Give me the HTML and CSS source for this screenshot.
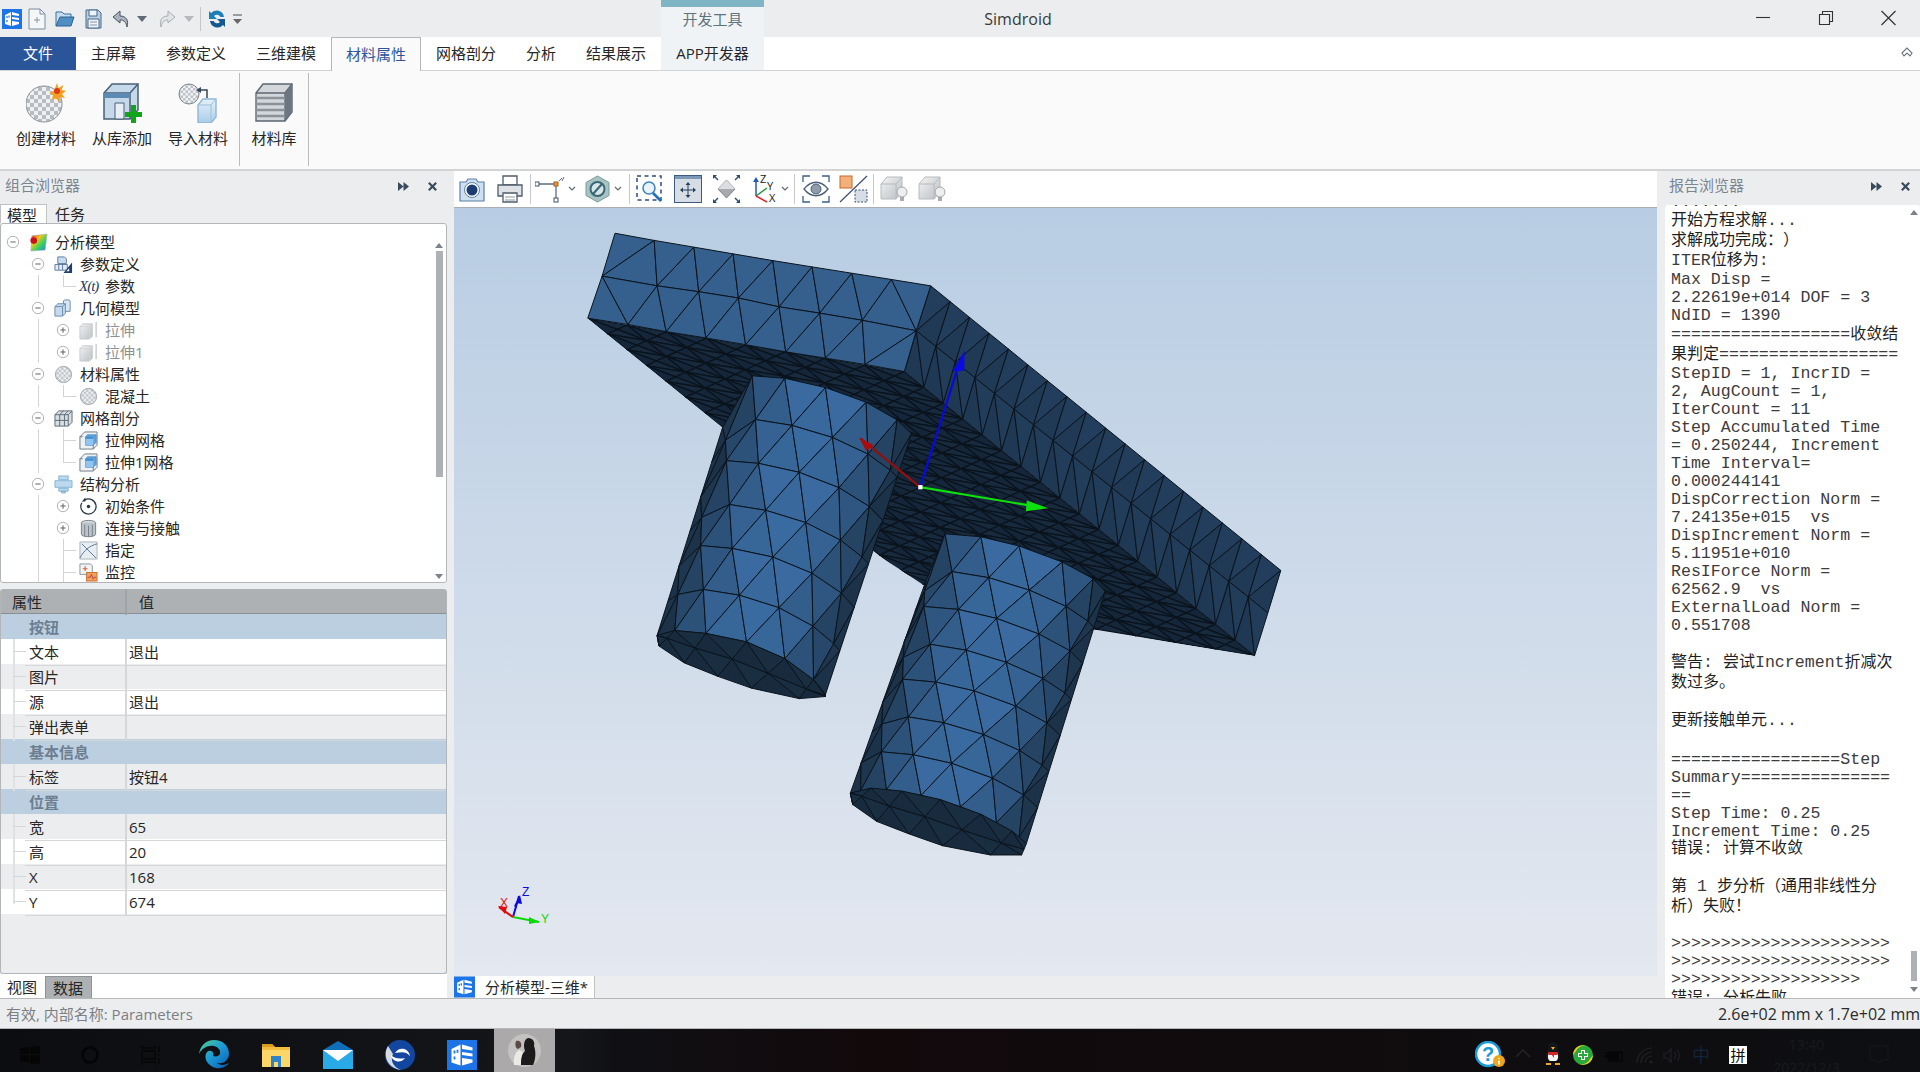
FILE: index.html
```html
<!DOCTYPE html>
<html lang="zh">
<head>
<meta charset="utf-8">
<title>Simdroid</title>
<link rel="stylesheet" href="styles.css">
</head>
<body>
<svg class="defs" width="0" height="0" aria-hidden="true">
  <defs>
    <linearGradient id="vpbg" x1="0" y1="0" x2="0" y2="1"><stop offset="0" stop-color="#b8cde3"/><stop offset="1" stop-color="#e4e8f0"/></linearGradient>
    <linearGradient id="rainbow" x1="0" y1="0" x2="1" y2="1"><stop offset="0" stop-color="#e8141c"/><stop offset=".35" stop-color="#f5c518"/><stop offset=".6" stop-color="#3fd45a"/><stop offset="1" stop-color="#1a7fe0"/></linearGradient>
    <linearGradient id="edgeg" x1="0" y1="0" x2="1" y2="1"><stop offset="0" stop-color="#52d08a"/><stop offset=".5" stop-color="#1b9ad6"/><stop offset="1" stop-color="#0c5bb0"/></linearGradient>
    <linearGradient id="steel" x1="0" y1="0" x2="1" y2="1"><stop offset="0" stop-color="#f4f5f6"/><stop offset="1" stop-color="#b9bdc2"/></linearGradient>
    <linearGradient id="blueg" x1="0" y1="0" x2="0" y2="1"><stop offset="0" stop-color="#e6f1fa"/><stop offset="1" stop-color="#a9cdea"/></linearGradient>
    <pattern id="checker" width="8" height="8" patternUnits="userSpaceOnUse"><rect width="8" height="8" fill="#eef0f2"/><rect width="4" height="4" fill="#b7bcc2"/><rect x="4" y="4" width="4" height="4" fill="#b7bcc2"/></pattern>
    <pattern id="dots" width="5" height="5" patternUnits="userSpaceOnUse"><rect width="5" height="5" fill="#f2f3f5"/><rect width="2.500" height="2.500" fill="#bcc1c7"/><rect x="2.500" y="2.500" width="2.500" height="2.500" fill="#bcc1c7"/></pattern>

    <symbol id="app" viewBox="0 0 20 20"><rect width="20" height="20" fill="#1c74e6"/><path d="M3 6 9 3v14l-6-2zM10 3l7 2v2l-7-1zM10 8l7 1v2l-7-1zM10 12l7 1v2l-7 2z" fill="#fff"/><path d="M5 7v2M5 11v2M7 6.500v2" stroke="#1c74e6" stroke-width="1.200"/></symbol>
    <symbol id="min" viewBox="0 0 16 16"><circle cx="8" cy="8" r="6.500" fill="#fff" stroke="#a8a8a8"/><path d="M5 8h6" stroke="#666" stroke-width="1.200"/></symbol>
    <symbol id="plus" viewBox="0 0 16 16"><circle cx="8" cy="8" r="6.500" fill="#fff" stroke="#a8a8a8"/><path d="M5 8h6M8 5v6" stroke="#666" stroke-width="1.200"/></symbol>
    <symbol id="t-root" viewBox="0 0 20 20"><path d="M3 3 19 1l-2 17-15 1z" fill="url(#rainbow)" stroke="#9fb3c6" stroke-width=".6"/><circle cx="5" cy="8" r="3.500" fill="#c9101a"/></symbol>
    <symbol id="t-param" viewBox="0 0 20 20"><path d="M4 2h7l2 2v5H4z" fill="#c9dcef" stroke="#5d7b9c"/><path d="M1 10h13v6H1z" fill="#e4edf6" stroke="#5d7b9c"/><path d="M5 10v6M9 10v6" stroke="#5d7b9c"/><path d="M19 8v11H10z" fill="#1f3f6c"/><path d="M16 14v3h-3z" fill="#fff"/></symbol>
    <symbol id="t-geo" viewBox="0 0 20 20"><path d="M10 2c0-1.500 7-1.500 7 0v11h-7z" fill="#d7e6f3" stroke="#6d8aa8"/><path d="M1 8l3-3h8v10l-3 3H1z" fill="#c3daef" stroke="#6d8aa8"/><path d="M1 8h8v10M9 8l3-3" fill="none" stroke="#6d8aa8"/></symbol>
    <symbol id="t-solid" viewBox="0 0 20 20"><path d="M1 6l3-3h10v13l-3 3H1z" fill="url(#steel)" stroke="#c6c9cc"/><path d="M1 6h10v13M11 6l3-3" fill="none" stroke="#d2d4d6"/><path d="M18 1v16" stroke="#b0b3b6"/></symbol>
    <symbol id="t-mat" viewBox="0 0 20 20"><circle cx="10" cy="10" r="8.500" fill="url(#dots)" stroke="#9aa2ab"/></symbol>
    <symbol id="t-grid" viewBox="0 0 20 20"><path d="M1 6l4-4h14v12l-4 4H1z" fill="#d9dee4" stroke="#5b6875"/><path d="M1 6h14v12M15 6l4-4M1 12h14M6 6v12M11 6v12M10 2l-4 4M15 2l-4 4" fill="none" stroke="#5b6875"/></symbol>
    <symbol id="t-mesh" viewBox="0 0 20 20"><path d="M1 6l5-5h13v14l-4 4H1z" fill="#eef1f4" stroke="#6c7a88"/><path d="M1 6h3M15 19V12" stroke="#6c7a88"/><path d="M7 6l2-2h9v8l-3 3H7z" fill="#62a8e0" stroke="#3978b0" stroke-width=".7"/><path d="M7 8h8v7H7z" fill="#8fc5ee"/><path d="M7 6h8v2H7z" fill="#3f8bcd"/></symbol>
    <symbol id="t-struct" viewBox="0 0 20 20"><path d="M5 1h10v4H5zM1 6h18v7H1zM5 14h10v3H5zM8 17h4v2H8z" fill="#bcd9ee" stroke="#72a6cc" stroke-width=".8"/></symbol>
    <symbol id="t-init" viewBox="0 0 20 20"><path d="M6 3a8 8 0 1 1-3 3" fill="none" stroke="#2a3644" stroke-width="1.300"/><path d="M6.500 .500l.5 4-4 .5z" fill="#2a3644"/><circle cx="10" cy="10" r="1.800" fill="#2a3644"/></symbol>
    <symbol id="t-contact" viewBox="0 0 20 20"><ellipse cx="10" cy="4" rx="7.500" ry="2.500" fill="#d7dadd" stroke="#76808a"/><path d="M2.500 4v12c0 3.500 15 3.500 15 0V4" fill="#bcc3c9" stroke="#76808a"/><path d="M6 6v12M10 7v12M14 6v12" stroke="#76808a"/></symbol>
    <symbol id="t-assign" viewBox="0 0 20 20"><path d="M1 1h18v18H1z" fill="#e8edf2" stroke="#a9b3bd"/><path d="M1 18C5 10 11 5 19 3M3 3l15 15" fill="none" stroke="#5a7694"/></symbol>
    <symbol id="t-monitor" viewBox="0 0 20 20"><path d="M1 1h11l2 2v9H1z" fill="#f2f3f5" stroke="#8a949e"/><path d="M4 6h5M6.500 3.500v5" stroke="#e0622c" stroke-width="1.200"/><rect x="8" y="10" width="11" height="9" fill="#f0a060" stroke="#cf6f2c"/><path d="M9 15h3l1-3 2 5 1-2h2" fill="none" stroke="#a33" stroke-width=".8"/></symbol>

    <symbol id="cubebulb" viewBox="0 0 28 28"><path d="M1 9l6-7h15v15l-6 7H1z" fill="url(#steel)" stroke="#b6babe"/><path d="M1 9h15v15M16 9l6-7" fill="none" stroke="#b6babe"/><circle cx="22" cy="17" r="5" fill="#eeeeee" stroke="#a3a7ab"/><path d="M20 22h4v4h-4z" fill="#a8acb0"/></symbol>
    <symbol id="chev" viewBox="0 0 8 6"><path d="M1 1l3 3 3-3" fill="none" stroke="#5e6a78" stroke-width="1.200"/></symbol>
    <symbol id="dbl" viewBox="0 0 12 12"><path d="M0 1l6 5-6 5zM6 1l6 5-6 5z" fill="#3a4a5c"/></symbol>
    <symbol id="x" viewBox="0 0 12 12"><path d="M2 2l8 8M10 2l-8 8" stroke="#3a4a5c" stroke-width="2.400"/></symbol>
  </defs>
</svg>

<div class="app">
  <header class="titlebar">
    <div class="qat">
      <svg class="ml2" width="20" height="20"><use href="#app"/></svg>
      <svg class="ml6" width="18" height="22" viewBox="0 0 18 22"><path d="M1 1h11l5 5v15H1z" fill="#f4f6f8" stroke="#7d8ea0"/><path d="M12 1v5h5" fill="none" stroke="#7d8ea0"/><path d="M6 12h6M9 9v6" stroke="#8a97a4"/></svg>
      <svg class="ml9" width="20" height="18" viewBox="0 0 20 18"><path d="M1 16V2h6l2 2h7v3" fill="#c7dcee" stroke="#3d6f9e"/><path d="M1 16 5 7h14l-3 9z" fill="#4f8fc4" stroke="#2f628f"/></svg>
      <svg class="ml10" width="17" height="20" viewBox="0 0 17 20"><path d="M1 1h12l3 3v15H1z" fill="#b9cfe3" stroke="#49688a"/><path d="M4 1h8v6H4z" fill="#eef3f7" stroke="#49688a"/><path d="M3 10h11v9H3z" fill="#f1f4f7" stroke="#49688a"/><path d="M5 13h7M5 16h7" stroke="#8295a8"/></svg>
      <svg class="ml10" width="18" height="20" viewBox="0 0 18 20"><path d="M8 2 1 8l7 6v-3c4 0 6 2 7 7 2-7-1-11-7-11z" fill="#aab3bd" stroke="#4a5563"/></svg>
      <svg class="ml7" width="10" height="8" viewBox="0 0 10 8"><path d="M0 1h10L5 7z" fill="#5f6a76"/></svg>
      <svg class="ml11" width="18" height="20" viewBox="0 0 18 20"><path d="M10 2l7 6-7 6v-3c-4 0-6 2-7 7-2-7 1-11 7-11z" fill="#e2e4e7" stroke="#a7adb3"/></svg>
      <svg class="ml8" width="10" height="8" viewBox="0 0 10 8"><path d="M0 1h10L5 7z" fill="#b5b9be"/></svg>
      <span class="qsep ml6"></span>
      <svg class="ml7" width="18" height="22" viewBox="0 0 18 22"><path d="M16 9A7.500 7.500 0 0 0 3 5L1 3v8h8L6 8a4 4 0 0 1 6.500 1z" fill="#1c7fb8"/><path d="M2 13a7.500 7.500 0 0 0 13 4l2 2v-8H9l3 3a4 4 0 0 1-6.500-1z" fill="#14598f"/></svg>
      <svg class="ml7" width="9" height="12" viewBox="0 0 9 12"><path d="M0 2h9" stroke="#666" stroke-width="1.200"/><path d="M0 6h9l-4.500 5z" fill="#666"/></svg>
    </div>
    <div class="ctx-title"><span>开发工具</span></div>
    <div class="wintitle">Simdroid</div>
    <div class="winctl">
      <svg width="63" height="37" viewBox="0 0 63 37"><path d="M25 17.500h14" stroke="#333" stroke-width="1.100"/></svg>
      <svg width="63" height="37" viewBox="0 0 63 37"><path d="M25.500 14.500h10v10h-10zM28.500 14.500v-3h10v10h-3" fill="none" stroke="#333" stroke-width="1.100"/></svg>
      <svg width="63" height="37" viewBox="0 0 63 37"><path d="M24.500 11l14 14M38.500 11l-14 14" stroke="#333" stroke-width="1.200"/></svg>
    </div>
  </header>

  <nav class="menubar">
    <span class="tab tab-file">文件</span>
    <span class="tab">主屏幕</span>
    <span class="tab">参数定义</span>
    <span class="tab">三维建模</span>
    <span class="tab tab-on">材料属性</span>
    <span class="tab">网格剖分</span>
    <span class="tab">分析</span>
    <span class="tab">结果展示</span>
    <span class="tab tab-ctx">APP开发器</span>
    <svg class="collapse" width="12" height="10" viewBox="0 0 12 10"><path d="M1 6l5-5 5 5-2 3-3-3-3 3z" fill="#fff" stroke="#6a737c" stroke-width="1.100"/></svg>
  </nav>

  <section class="ribbon">
    <div class="rgroup">
      <div class="rbtn">
        <svg width="40" height="40" viewBox="0 0 40 40"><circle cx="18" cy="21" r="18" fill="url(#checker)" stroke="#8a9097"/><path d="M31 0l1.500 5 5-3-2 5 4.500 1-4 3 3 4-5-1-1 5-3-4-4 2 1-5-4-2 5-2z" fill="#f4a01e"/><circle cx="31" cy="8" r="3" fill="#e23a12"/></svg>
        <span>创建材料</span>
      </div>
      <div class="rbtn">
        <svg width="40" height="40" viewBox="0 0 40 40"><path d="M2 10l8-9h26v26l-8 9H2z" fill="#c6d9ea" stroke="#4b6076" stroke-width="1.500"/><path d="M2 10h26v26M28 10l8-9" fill="none" stroke="#4b6076" stroke-width="1.500"/><path d="M2 10h26v5H2z" fill="#5d8ab4"/><path d="M13 20h9v16h-9z" fill="#e7eef5" stroke="#4b6076"/><path d="M29 22h5v7h6v5h-6v6h-5v-6h-6v-5h6z" fill="#12a51c"/></svg>
        <span>从库添加</span>
      </div>
      <div class="rbtn">
        <svg width="40" height="40" viewBox="0 0 40 40"><circle cx="11" cy="11" r="10" fill="url(#dots)" stroke="#7d868f"/><path d="M22 7h7v8" fill="none" stroke="#39485a" stroke-width="1.500"/><path d="M18 7l5-3v6z" fill="#39485a"/><path d="M20 22l5-6h13v18l-5 6H20z" fill="url(#blueg)" stroke="#8fb6d6" stroke-width="1.400"/><path d="M20 22h13v18M33 22l5-6" fill="none" stroke="#9cc1de"/></svg>
        <span>导入材料</span>
      </div>
    </div>
    <span class="rsep"></span>
    <div class="rgroup">
      <div class="rbtn rbtn-lib">
        <svg width="40" height="40" viewBox="0 0 40 40"><path d="M2 10l7-9h29v28l-7 9H2z" fill="#d3d6da" stroke="#5c6670" stroke-width="1.400"/><path d="M2 10h29v28M31 10l7-9" fill="none" stroke="#5c6670" stroke-width="1.400"/><path d="M2 15h29M2 21h29M2 27h29M2 33h29" stroke="#8b929a" stroke-width="2.500"/><path d="M31 10l7-9v28l-7 9z" fill="#6c7680"/></svg>
        <span>材料库</span>
      </div>
    </div>
    <span class="rsep"></span>
  </section>

  <main class="workspace">
    <aside class="leftpanel">
      <div class="phead"><span>组合浏览器</span><svg class="pbtn" width="11" height="11"><use href="#dbl"/></svg><svg class="pbtn pbtn-x" width="11" height="11"><use href="#x"/></svg></div>
      <div class="ltabs"><span class="ltab ltab-on">模型</span><span class="ltab">任务</span></div>
      <div class="treebox">
        <div class="tree">
          <div class="row"><span class="cell"><svg class="tg" width="14" height="14"><use href="#min"/></svg></span><svg class="ic" width="19" height="19"><use href="#t-root"/></svg><span>分析模型</span></div>
          <div class="row"><span class="cell"></span><span class="cell"><svg class="tg" width="14" height="14"><use href="#min"/></svg></span><svg class="ic" width="19" height="19"><use href="#t-param"/></svg><span>参数定义</span></div>
          <div class="row"><span class="cell"></span><span class="cell g-v"></span><span class="cell g-l"></span><span class="ic ic-xt">X(t)</span><span>参数</span></div>
          <div class="row"><span class="cell"></span><span class="cell"><svg class="tg" width="14" height="14"><use href="#min"/></svg></span><svg class="ic" width="19" height="19"><use href="#t-geo"/></svg><span>几何模型</span></div>
          <div class="row muted"><span class="cell"></span><span class="cell g-v"></span><span class="cell"><svg class="tg" width="14" height="14"><use href="#plus"/></svg></span><svg class="ic" width="19" height="19"><use href="#t-solid"/></svg><span>拉伸</span></div>
          <div class="row muted"><span class="cell"></span><span class="cell g-v"></span><span class="cell"><svg class="tg" width="14" height="14"><use href="#plus"/></svg></span><svg class="ic" width="19" height="19"><use href="#t-solid"/></svg><span>拉伸1</span></div>
          <div class="row"><span class="cell"></span><span class="cell"><svg class="tg" width="14" height="14"><use href="#min"/></svg></span><svg class="ic" width="19" height="19"><use href="#t-mat"/></svg><span>材料属性</span></div>
          <div class="row"><span class="cell"></span><span class="cell g-v"></span><span class="cell g-l"></span><svg class="ic" width="19" height="19"><use href="#t-mat"/></svg><span>混凝土</span></div>
          <div class="row"><span class="cell"></span><span class="cell"><svg class="tg" width="14" height="14"><use href="#min"/></svg></span><svg class="ic" width="19" height="19"><use href="#t-grid"/></svg><span>网格剖分</span></div>
          <div class="row"><span class="cell"></span><span class="cell g-v"></span><span class="cell g-t"></span><svg class="ic" width="19" height="19"><use href="#t-mesh"/></svg><span>拉伸网格</span></div>
          <div class="row"><span class="cell"></span><span class="cell g-v"></span><span class="cell g-l"></span><svg class="ic" width="19" height="19"><use href="#t-mesh"/></svg><span>拉伸1网格</span></div>
          <div class="row"><span class="cell"></span><span class="cell"><svg class="tg" width="14" height="14"><use href="#min"/></svg></span><svg class="ic" width="19" height="19"><use href="#t-struct"/></svg><span>结构分析</span></div>
          <div class="row"><span class="cell"></span><span class="cell g-v"></span><span class="cell"><svg class="tg" width="14" height="14"><use href="#plus"/></svg></span><svg class="ic" width="19" height="19"><use href="#t-init"/></svg><span>初始条件</span></div>
          <div class="row"><span class="cell"></span><span class="cell g-v"></span><span class="cell"><svg class="tg" width="14" height="14"><use href="#plus"/></svg></span><svg class="ic" width="19" height="19"><use href="#t-contact"/></svg><span>连接与接触</span></div>
          <div class="row"><span class="cell"></span><span class="cell g-v"></span><span class="cell g-t"></span><svg class="ic" width="19" height="19"><use href="#t-assign"/></svg><span>指定</span></div>
          <div class="row"><span class="cell"></span><span class="cell g-v"></span><span class="cell g-t"></span><svg class="ic" width="19" height="19"><use href="#t-monitor"/></svg><span>监控</span></div>
        </div>
        <div class="vscroll vscroll-tree"><i class="arr-up"></i><b class="thumb"></b><i class="arr-down"></i></div>
      </div>
      <div class="props">
        <div class="prow phdr"><span class="pk">属性</span><span class="pv">值</span></div>
        <div class="prow pgroup"><span>按钮</span></div>
        <div class="prow pw"><span class="pg"></span><span class="pk">文本</span><span class="pv">退出</span></div>
        <div class="prow"><span class="pg"></span><span class="pk">图片</span><span class="pv"></span></div>
        <div class="prow pw"><span class="pg"></span><span class="pk">源</span><span class="pv">退出</span></div>
        <div class="prow"><span class="pg"></span><span class="pk">弹出表单</span><span class="pv"></span></div>
        <div class="prow pgroup"><span>基本信息</span></div>
        <div class="prow"><span class="pg"></span><span class="pk">标签</span><span class="pv">按钮4</span></div>
        <div class="prow pgroup"><span>位置</span></div>
        <div class="prow"><span class="pg"></span><span class="pk">宽</span><span class="pv">65</span></div>
        <div class="prow pw"><span class="pg"></span><span class="pk">高</span><span class="pv">20</span></div>
        <div class="prow"><span class="pg"></span><span class="pk">X</span><span class="pv">168</span></div>
        <div class="prow pw pend"><span class="pg"></span><span class="pk">Y</span><span class="pv">674</span></div>
      </div>
      <div class="btabs"><span class="btab">视图</span><span class="btab btab-on">数据</span></div>
    </aside>

    <section class="center">
      <div class="vtools">
        <svg class="ml4" width="28" height="28" viewBox="0 0 28 28"><path d="M2 7h6l2-3h8l2 3h6v19H2z" fill="#cfe0f0" stroke="#5f7fa3" stroke-width="1.200"/><circle cx="14" cy="15" r="7.500" fill="#fff" stroke="#5f7fa3"/><circle cx="14" cy="15" r="5.500" fill="#1c3c74"/></svg>
        <svg class="ml11" width="26" height="28" viewBox="0 0 26 28"><path d="M6 1h14v9H6z" fill="#fff" stroke="#4f5c6b" stroke-width="1.300"/><path d="M1 10h24v11H1z" fill="#dfe3e7" stroke="#4f5c6b" stroke-width="1.300"/><path d="M6 18h14v9H6z" fill="#fff" stroke="#4f5c6b" stroke-width="1.300"/><path d="M8 22h10M8 25h10" stroke="#8b95a0"/></svg>
        <span class="vsep ml7"></span>
        <svg class="ml4" width="30" height="28" viewBox="0 0 30 28"><path d="M2 9h19M21 9v16" stroke="#5c6f84" stroke-width="1.300"/><path d="M24 6l3-3M27 6l2-4" stroke="#5c6f84" stroke-width="1"/><rect x="0" y="7" width="4" height="4" fill="#fff" stroke="#3f5268"/><rect x="19" y="23" width="4" height="4" fill="#fff" stroke="#3f5268"/><rect x="19" y="7" width="4" height="4" fill="#e6923e" stroke="#a8601c"/></svg>
        <svg class="ml3" width="8" height="6"><use href="#chev"/></svg>
        <svg class="ml9" width="25" height="28" viewBox="0 0 25 28"><path d="M12.500 1 24 7.500v13L12.500 27 1 20.500v-13z" fill="#a8c3c2" stroke="#7b9b9a"/><circle cx="12.500" cy="14" r="7" fill="#d9e6e6" stroke="#3a6878" stroke-width="2"/><path d="M8 19l9-10" stroke="#3a6878" stroke-width="2.200"/></svg>
        <svg class="ml4" width="8" height="6"><use href="#chev"/></svg>
        <span class="vsep ml7"></span>
        <svg class="ml6" width="27" height="28" viewBox="0 0 27 28"><rect x="1" y="1" width="24" height="24" fill="none" stroke="#2f4a78" stroke-width="1.500" stroke-dasharray="4 3.500"/><circle cx="13" cy="13" r="6" fill="#eaf3fb" stroke="#3f86c0" stroke-width="1.600"/><path d="M17 18l8 8" stroke="#2272b4" stroke-width="2.600"/></svg>
        <svg class="ml11" width="28" height="28" viewBox="0 0 28 28"><rect x=".5" y=".5" width="27" height="27" fill="#d7dde5" stroke="#3f5a80"/><path d="M1 1h26v3H1z" fill="#7e98b8"/><path d="M14 9v12M8 15h12" stroke="#24405f"/><path d="M14 7l2.500 3h-5zM14 23l2.500-3h-5zM6 15l3-2.500v5zM22 15l-3-2.500v5z" fill="#24405f"/></svg>
        <svg class="ml11" width="27" height="28" viewBox="0 0 27 28"><path d="M13.500 5 22 14l-8.500 9L5 14z" fill="#a6a9ad" stroke="#7e8287"/><path d="M13.500 5 22 14H5z" fill="#dcdde0"/><path d="M1 1l4 4M26 1l-4 4M1 27l4-4M26 27l-4-4" stroke="#2c4a75" stroke-width="1.400"/><path d="M0 0h4L0 4zM27 0h-4l4 4zM0 28h4l-4-4zM27 28h-4l4-4z" fill="#2c4a75"/></svg>
        <svg class="ml12 triad" width="26" height="30" viewBox="0 0 26 30"><path d="M4 22V6" stroke="#1d5fb5" stroke-width="1.500"/><path d="M4 3l3 5H1z" fill="#1d5fb5"/><path d="M4 22 15 14" stroke="#1d9a3c" stroke-width="1.500"/><path d="M4 22 15 28" stroke="#e0262a" stroke-width="1.500"/><text x="8" y="9" class="axt">Z</text><text x="15" y="16" class="axt">Y</text><text x="17" y="28" class="axt">X</text></svg>
        <svg class="ml3" width="8" height="6"><use href="#chev"/></svg>
        <span class="vsep ml5"></span>
        <svg class="ml7" width="28" height="28" viewBox="0 0 28 28"><path d="M1 7V1h7M20 1h7v6M1 21v6h7M20 27h7v-6" fill="none" stroke="#3f5e86" stroke-width="1.300"/><path d="M2 14c7-9 17-9 24 0-7 9-17 9-24 0z" fill="#fff" stroke="#4d6078" stroke-width="1.300"/><circle cx="14" cy="14" r="5" fill="#8e9cac" stroke="#4d6078"/></svg>
        <svg class="ml9" width="29" height="28" viewBox="0 0 29 28"><rect x="1" y="1" width="12" height="12" fill="#f1b07c" stroke="#c9682a"/><path d="M1 27 28 1" stroke="#3a5070" stroke-width="1.200"/><rect x="16" y="15" width="12" height="12" fill="#d6dde6" stroke="#3a5070" stroke-dasharray="2 1.500"/></svg>
        <span class="vsep ml5"></span>
        <svg class="ml6" width="28" height="28"><use href="#cubebulb"/></svg>
        <svg class="ml10" width="28" height="28"><use href="#cubebulb"/></svg>
      </div>
      <div class="viewport">
        <svg class="scene" viewBox="454 207 1203 769" preserveAspectRatio="none" role="img" aria-label="分析模型">
          <rect x="454" y="207" width="1203" height="769" fill="url(#vpbg)"/>
          <g id="mesh" transform="translate(560 210) scale(.4783 .4209)"></g>
          <g transform="translate(560 210) scale(.4783 .4209)">
            <path d="M753 657 628 541" stroke="#8f1010" stroke-width="2.400" vector-effect="non-scaling-stroke"/>
            <path d="M625 538 656 557 640 571z" fill="#a80c0c"/>
            <path d="M753 657 838 350" stroke="#0808e0" stroke-width="2.200" vector-effect="non-scaling-stroke"/>
            <path d="M846 332 845 380 821 381z" fill="#0a0ae6"/>
            <path d="M753 657 990 702" stroke="#10e010" stroke-width="2.200" vector-effect="non-scaling-stroke"/>
            <path d="M1021 707 976 689 974 714z" fill="#0de00d"/>
            <rect x="749" y="652" width="9" height="10" fill="#fff"/>
          </g>
          <g class="mini">
            <path d="M513 917 519 896" stroke="#0b0be0" stroke-width="2"/>
            <path d="M520 895 522 904 516 903 517 908 514 906z" fill="#0b0be0"/>
            <path d="M513 917 499 907" stroke="#e00b0b" stroke-width="2"/>
            <path d="M498 906 507 907 505 914z" fill="#e00b0b"/>
            <path d="M513 917 539 922" stroke="#0bd80b" stroke-width="2"/>
            <path d="M540 922 529 917 529 924z" fill="#0bd80b"/>
            <text x="522" y="896" class="mz">Z</text>
            <text x="500" y="907" class="mx">X</text>
            <text x="541" y="923" class="my">Y</text>
          </g>
        </svg>
      </div>
      <div class="doctabs">
        <svg width="21" height="22"><use href="#app"/></svg>
        <span class="doctab">分析模型-三维*</span>
      </div>
    </section>

    <aside class="rightpanel">
      <div class="phead"><span>报告浏览器</span><svg class="pbtn" width="11" height="11"><use href="#dbl"/></svg><svg class="pbtn pbtn-x" width="11" height="11"><use href="#x"/></svg></div>
      <div class="logbox">
        <div class="log">
          <div class="m">.......</div>
          <div class="c">开始方程求解<span class="a">...</span></div>
          <div class="c">求解成功完成：）</div>
          <div class="c"><span class="a">ITER</span>位移为<span class="a">:</span></div>
          <div class="m">Max Disp =</div>
          <div class="m">2.22619e+014 DOF = 3</div>
          <div class="m">NdID = 1390</div>
          <div class="c"><span class="a">==================</span>收敛结</div>
          <div class="c">果判定<span class="a">==================</span></div>
          <div class="m">StepID = 1, IncrID =</div>
          <div class="m">2, AugCount = 1,</div>
          <div class="m">IterCount = 11</div>
          <div class="m">Step Accumulated Time</div>
          <div class="m">= 0.250244, Increment</div>
          <div class="m">Time Interval=</div>
          <div class="m">0.000244141</div>
          <div class="m">DispCorrection Norm =</div>
          <div class="m">7.24135e+015  vs</div>
          <div class="m">DispIncrement Norm =</div>
          <div class="m">5.11951e+010</div>
          <div class="m">ResIForce Norm =</div>
          <div class="m">62562.9  vs</div>
          <div class="m">ExternalLoad Norm =</div>
          <div class="m">0.551708</div>
          <div class="m">&nbsp;</div>
          <div class="c">警告<span class="a">: </span>尝试<span class="a">Increment</span>折减次</div>
          <div class="c">数过多。</div>
          <div class="m">&nbsp;</div>
          <div class="c">更新接触单元<span class="a">...</span></div>
          <div class="c">&nbsp;</div>
          <div class="m">=================Step</div>
          <div class="m">Summary===============</div>
          <div class="m">==</div>
          <div class="m">Step Time: 0.25</div>
          <div class="m">Increment Time: 0.25</div>
          <div class="c c-tight">错误<span class="a">: </span>计算不收敛</div>
          <div class="m">&nbsp;</div>
          <div class="c">第<span class="a"> 1 </span>步分析（通用非线性分</div>
          <div class="c">析）失败！</div>
          <div class="m">&nbsp;</div>
          <div class="m">&gt;&gt;&gt;&gt;&gt;&gt;&gt;&gt;&gt;&gt;&gt;&gt;&gt;&gt;&gt;&gt;&gt;&gt;&gt;&gt;&gt;&gt;</div>
          <div class="m">&gt;&gt;&gt;&gt;&gt;&gt;&gt;&gt;&gt;&gt;&gt;&gt;&gt;&gt;&gt;&gt;&gt;&gt;&gt;&gt;&gt;&gt;</div>
          <div class="m">&gt;&gt;&gt;&gt;&gt;&gt;&gt;&gt;&gt;&gt;&gt;&gt;&gt;&gt;&gt;&gt;&gt;&gt;&gt;</div>
          <div class="c">错误<span class="a">: </span>分析失败</div>
        </div>
        <div class="vscroll vscroll-log"><i class="arr-up"></i><b class="thumb"></b><i class="arr-down"></i></div>
      </div>
    </aside>
  </main>

  <footer class="status"><span>有效, 内部名称: Parameters</span><span>2.6e+02 mm x 1.7e+02 mm</span></footer>

  <div class="taskbar">
    <svg class="ml20" width="20" height="20" viewBox="0 0 20 20"><path d="M0 3l9-1v7H0zM10 2l10-1v8H10zM0 10h9v7l-9-1zM10 10h10v9l-10-1z" fill="#050505"/></svg>
    <svg class="ml41" width="18" height="18" viewBox="0 0 18 18"><circle cx="9" cy="9" r="7.500" fill="none" stroke="#040404" stroke-width="2.400"/></svg>
    <svg class="ml42" width="20" height="20" viewBox="0 0 20 20"><path d="M1 0v3h13V0M1 20v-3h13v3M1 6h13v8H1zM18 1v6M18 9v2M18 13v6" fill="none" stroke="#060606" stroke-width="1.400"/></svg>
    <svg class="ml38" width="30" height="30" viewBox="0 0 30 30"><path d="M15 0C7 0 1 6 0 14c3-6 9-9 15-8 4 1 7 4 6 8-1 2-4 3-7 2 2-4-3-7-6-4-4 5 0 14 9 16 6 1 11-2 13-5-5 3-10 2-12 0 8 2 12-5 12-9C30 6 24 0 15 0z" fill="url(#edgeg)"/></svg>
    <svg class="ml33" width="28" height="28" viewBox="0 0 28 28"><path d="M0 3h10l3 3h15v20H0z" fill="#f2bd3d"/><path d="M0 3h10l3 3H0z" fill="#d99a1e"/><path d="M0 9h28v17H0z" fill="#fbd669"/><path d="M9 15h10v11h-3v-5h-4v5H9z" fill="#2f83c6"/></svg>
    <svg class="ml33" width="30" height="28" viewBox="0 0 30 28"><path d="M15 0l15 9H0z" fill="#0e6fb8"/><path d="M0 9h30v19H0z" fill="#29a9e6"/><path d="M0 9l15 11L30 9z" fill="#fff"/></svg>
    <svg class="ml32" width="30" height="30" viewBox="0 0 30 30"><circle cx="15" cy="15" r="15" fill="#13479f"/><path d="M3 6C-3 16 3 28 16 30 8 27 5 20 8 14z" fill="#d6dadd"/><path d="M10 13C14 6 24 8 25 16 21 11 16 12 10 13z" fill="#fff"/><path d="M20 18C16 24 7 22 6 15 10 19 15 19 20 18z" fill="#fff"/></svg>
    <svg class="ml32" width="30" height="30"><use href="#app"/></svg>
    <span class="task-active"><svg width="33" height="33" viewBox="0 0 33 33"><circle cx="16.500" cy="16.500" r="16.500" fill="#c4c2c0"/><path d="M20 4c5 0 7 4 6 8 2 5 2 13-1 19H13c-1-6 1-11 4-14-2-5-1-12 3-13z" fill="#1c1a1a"/><path d="M8 7c4-1 6 2 5 6l-3 2c-3-1-3-5-2-8z" fill="#5a4a44"/><path d="M6 31c-1-6 1-13 5-15l4 2c-2 4-2 9-2 13z" fill="#eceae6"/></svg></span>
    <div class="tray">
      <svg width="34" height="28" viewBox="0 0 34 28"><circle cx="13" cy="13" r="12" fill="#fff" stroke="#1a9ad8" stroke-width="2.500"/><text x="13" y="20" class="helpq">?</text><circle cx="24" cy="20" r="6" fill="#eda61c"/><path d="M24 17v1M24 19.500v4" stroke="#fff" stroke-width="1.600"/></svg>
      <svg class="tr-chev" width="16" height="9" viewBox="0 0 16 9"><path d="M1 8l7-7 7 7" fill="none" stroke="#24272a" stroke-width="1.300"/></svg>
      <svg class="tr-qq" width="16" height="23" viewBox="0 0 16 23"><path d="M8 0c4 0 5 3 5 7 2 4 3 8 1 11H2C0 15 1 11 3 7c0-4 1-7 5-7z" fill="#14171a"/><path d="M4 11h8c2 3 1 7-1 8H5c-2-1-3-5-1-8z" fill="#f5f5f5"/><path d="M3 10h10l-1 3-3 0v3l-2-3H4z" fill="#d8262c"/><path d="M6 5h4l-2 3z" fill="#f2b01e"/><path d="M1 21h5v2H1zM10 21h5v2h-5z" fill="#f2a51e"/></svg>
      <svg class="tr-green" width="20" height="20" viewBox="0 0 20 20"><circle cx="10" cy="10" r="10" fill="#2aa83a"/><path d="M0 10A10 10 0 0 1 14 1c-5-1-9 1-11 5zM20 10a10 10 0 0 1-14 9c5 1 9-1 11-5z" fill="#f0cf1e"/><path d="M8 5h4v3h3v4h-3v3H8v-3H5V8h3z" fill="#fff"/><path d="M9 6h2v3h3v2h-3v3H9v-3H6V9h3z" fill="#2aa83a"/></svg>
      <svg class="tr-dark" width="19" height="13" viewBox="0 0 19 13"><rect x="4" y="3" width="14" height="9" fill="none" stroke="#050505" stroke-width="1.300"/><rect x="5" y="4" width="10" height="7" fill="#050505"/><path d="M0 7h4M2 3v2" stroke="#050505" stroke-width="1.300"/></svg>
      <svg class="tr-wifi" width="17" height="17" viewBox="0 0 17 17"><path d="M1 16A15 15 0 0 1 16 1M5 16A11 11 0 0 1 16 5M9 16a7 7 0 0 1 7-7" fill="none" stroke="#1f2225" stroke-width="1.200"/><circle cx="15" cy="15" r="1.500" fill="#1f2225"/></svg>
      <svg class="tr-vol" width="17" height="15" viewBox="0 0 17 15"><path d="M1 5h3l4-4v13l-4-4H1z" fill="none" stroke="#1f2225" stroke-width="1.200"/><path d="M11 4c2 2 2 5 0 7M14 2c3 3 3 8 0 11" fill="none" stroke="#1f2225" stroke-width="1.200"/></svg>
      <span class="tr-ime">中</span>
      <span class="tr-pin">拼</span>
      <span class="tr-clock"><span>13:40</span><span>2022/12/3</span></span>
      <svg class="tr-note" width="20" height="20" viewBox="0 0 20 20"><path d="M1 1h18v14h-6l-3 3-3-3H1z" fill="none" stroke="#16181b" stroke-width="1.200"/></svg>
    </div>
  </div>
</div>
<script src="mesh.js"></script>
</body>
</html>
```

FILE: styles.css
```css
* { box-sizing: border-box; }
html, body { margin: 0; padding: 0; }
body {
  width: 1920px; height: 1072px; overflow: hidden;
  font: 15px/20px "Open Sans", "Noto Sans CJK SC", sans-serif;
  color: #262626; background: #ecedef;
}
.defs { position: absolute; }
.app { display: flex; flex-direction: column; height: 1072px; }
svg { flex: none; display: block; }

.ml2 { margin-left: 2px; } .ml3 { margin-left: 3px; } .ml4 { margin-left: 4px; }
.ml5 { margin-left: 5px; } .ml6 { margin-left: 6px; } .ml7 { margin-left: 7px; }
.ml8 { margin-left: 8px; } .ml9 { margin-left: 9px; } .ml10 { margin-left: 10px; }
.ml11 { margin-left: 11px; } .ml12 { margin-left: 12px; } .ml20 { margin-left: 20px; }
.ml32 { margin-left: 32px; } .ml33 { margin-left: 33px; } .ml38 { margin-left: 38px; }
.ml41 { margin-left: 41px; } .ml42 { margin-left: 42px; }

/* title bar */
.titlebar { height: 37px; display: flex; background: #ecedef; flex: none; }
.qat { width: 661px; display: flex; align-items: center; }
.qsep { width: 1px; height: 24px; background: #c4c7ca; }
.ctx-title {
  width: 103px; background: #f0f3f5; border-top: 7px solid #7fb5c5; padding-bottom: 6px;
  display: flex; align-items: center; justify-content: center; color: #5d7480;
}
.wintitle { width: 508px; text-align: center; line-height: 38px; color: #3a3a3a; font-size: 16px; }
.winctl { margin-left: auto; display: flex; }

/* menu tabs */
.menubar { height: 33px; display: flex; background: #fff; position: relative; flex: none; }
.tab { padding: 0 15px; line-height: 33px; color: #262626; white-space: nowrap; }
.tab-file { width: 76px; padding: 0; text-align: center; background: #2a5599; color: #fff; }
.tab-on {
  color: #2a5599; background: #fafafa; border: 1px solid #b4b7ba; border-bottom: 0;
  padding: 0 14px; line-height: 32px; height: 34px; z-index: 1;
}
.tab-ctx { width: 103px; padding: 0; text-align: center; background: #f0f3f5; }
.collapse { margin: 10px 7px 0 auto; }

/* ribbon */
.ribbon {
  height: 101px; flex: none; display: flex; background: #fafafa;
  border-top: 1px solid #d2d4d6; border-bottom: 2px solid #d2d4d6; padding: 2px 0 3px 8px;
}
.rgroup { display: flex; }
.rbtn { width: 76px; display: flex; flex-direction: column; align-items: center; padding-top: 10px; }
.rbtn span { margin-top: 5px; white-space: nowrap; }
.rbtn-lib { width: 68px; }
.rsep { width: 1px; background: #b9bcbf; margin-left: 3px; }
.rsep:last-child { margin-left: 0; }

/* workspace */
.workspace {
  flex: 1; min-height: 0; display: grid;
  grid-template-columns: 454px 1211px 255px; background: #ecedef;
}
.leftpanel, .center, .rightpanel { display: flex; flex-direction: column; min-height: 0; }
.leftpanel { padding-right: 7px; }
.center { padding-right: 8px; }

.phead { height: 33px; flex: none; display: flex; align-items: center; padding-left: 5px; color: #7a858f; }
.phead > span { flex: 1; margin-top: -5px; }
.pbtn { margin-right: 18px; margin-top: -3px; }
.pbtn-x { margin-right: 9px; }
.rightpanel .phead { height: 34px; padding-left: 4px; }
.rightpanel .phead > span { margin-top: -7px; }

.ltabs { height: 19px; flex: none; display: flex; line-height: 20px; }
.ltab { padding: 0 8px; width: 47px; white-space: nowrap; }
.ltab-on { background: #fff; border: 1px solid #c0c2c5; border-bottom: 0; padding-left: 6px; }

.treebox {
  height: 360px; flex: none; display: flex; background: #fff; overflow: hidden;
  border: 1px solid #b3b6b9; border-radius: 3px;
}
.tree { flex: 1; padding-top: 7px; min-width: 0; }
.row { height: 22px; display: flex; align-items: center; white-space: nowrap; line-height: 22px; }
.muted { color: #8e9194; }
.cell { width: 25px; height: 22px; flex: none; position: relative; display: flex; align-items: center; padding-left: 5px; }
.g-v::before, .g-t::before, .g-l::before { content: ""; position: absolute; left: 12px; top: 0; width: 1px; background: #d2d4d6; }
.g-v::before, .g-t::before { bottom: 0; }
.g-l::before { height: 11px; }
.g-t::after, .g-l::after { content: ""; position: absolute; left: 12px; top: 11px; width: 13px; height: 1px; background: #d2d4d6; }
.ic { width: 19px; height: 19px; flex: none; margin: 0 7px 0 3px; }
.ic-xt { height: 22px; font: italic 15px/22px "Liberation Serif", serif; color: #24405f; letter-spacing: -1px; white-space: nowrap; }
.tg { flex: none; }

.vscroll { width: 14px; flex: none; display: flex; flex-direction: column; align-items: center; }
.vscroll-tree { padding-top: 19px; }
.arr-up, .arr-down { display: block; width: 0; height: 0; border-left: 4px solid transparent; border-right: 4px solid transparent; }
.arr-up { border-bottom: 5px solid #7b8289; }
.arr-down { border-top: 5px solid #7b8289; margin-top: auto; margin-bottom: 3px; }
.thumb { display: block; width: 7px; background: #adb1b6; }
.vscroll-tree .thumb { height: 226px; margin-top: 3px; }

/* properties */
.props {
  height: 385px; flex: none; margin-top: 6px; background: #ecedef; overflow: hidden;
  border: 1px solid #b3b6b9; border-top: 0; border-radius: 3px;
}
.prow {
  height: 25px; display: grid; grid-template-columns: 25px 100px 1fr; line-height: 26px;
  background: #ecedef; margin-left: -1px;
}
.pw { background: #fff; }
.phdr { background: #adb1b4; border-bottom: 1px solid #8a8e92; grid-template-columns: 125px 1fr; }
.phdr .pk { padding-left: 12px; border: 0; background: none; }
.phdr .pv { padding-left: 12px; border-left: 2px solid #a0a4a8; border-bottom: 0; }
.pgroup { background: #bbcfe1; display: block; padding-left: 29px; font-weight: 700; color: #6d7e90; }
.pg { position: relative; }
.pg::before { content: ""; position: absolute; left: 13px; top: 0; bottom: 0; width: 2px; background: #dfe1e3; }
.pg::after { content: ""; position: absolute; left: 13px; top: 12px; width: 13px; height: 1px; background: #d5d7d9; }
.pend .pg::before { bottom: 12px; }
.pk { padding-left: 4px; border-bottom: 1px solid #d5d7d9; }
.pv { padding-left: 2px; border-left: 2px solid #d5d7d9; border-bottom: 1px solid #d5d7d9; }
.btabs { height: 24px; flex: none; background: #fff; display: flex; align-items: flex-end; line-height: 22px; }
.btab { width: 45px; height: 22px; padding-left: 7px; white-space: nowrap; }
.btab-on { width: 47px; background: #adb1b4; border: 1px solid #8f9396; border-bottom: 0; }

/* centre */
.vtools { height: 36px; flex: none; display: flex; align-items: center; background: #fff; }
.vsep { width: 1px; height: 30px; background: #c6c8cb; flex: none; }
.axt { font: 11px "Open Sans", sans-serif; fill: #222; }
.triad { overflow: visible; }
.viewport { flex: 1; min-height: 0; border-top: 1px solid #a9adb2; overflow: hidden; }
.scene { width: 100%; height: 100%; }
.mz, .mx, .my { font: 12px "Liberation Sans", sans-serif; }
.mz { fill: #0b0be0; } .mx { fill: #e00b0b; } .my { fill: #0bd80b; }
.doctabs { height: 22px; flex: none; display: flex; background: #ecedef; }
.doctab { width: 120px; background: #fff; padding-left: 10px; line-height: 22px; white-space: nowrap; border-right: 1px solid #c0c2c5; }

/* report */
.logbox { flex: 1; min-height: 0; display: flex; background: #fff; overflow: hidden; border-radius: 3px 3px 0 0; }
.log { flex: 1; min-width: 0; padding-left: 6px; margin-top: -12px; color: #222; text-spacing-trim: space-all; }
.log .m { height: 18px; white-space: pre; font: 16.6px/18px "Liberation Mono", "Noto Sans CJK SC", monospace; color: #3c3c3c; }
.log .c { height: 20px; white-space: pre; font: 16px/20px "Liberation Mono", "Noto Sans CJK SC", monospace; color: #1f1f1f; }
.log .a { font-size: 16.6px; color: #3c3c3c; }
.log .c-tight { margin-top: -2px; }
.vscroll-log { width: 13px; padding-top: 5px; }
.vscroll-log .thumb { width: 6px; height: 30px; margin-top: auto; margin-bottom: 6px; }
.vscroll-log .arr-down { margin-top: 0; margin-bottom: 6px; }

/* status bar */
.status {
  height: 31px; flex: none; display: flex; justify-content: space-between; align-items: center;
  background: #ecedef; border-top: 1px solid #b5b7b9; border-bottom: 1px solid #b5b7b9; padding-left: 6px;
  color: #7b7f84;
}
.status span:last-child { color: #2b2b2b; font-size: 16px; }

/* taskbar */
.taskbar {
  height: 43px; flex: none; display: flex; align-items: center; padding-top: 9px;
  background: linear-gradient(90deg, #0c0d10 0, #14161a 30%, #101014 32%, #12090b 45%, #0d0f12 100%);
}
.task-active { width: 61px; height: 43px; margin: -9px 0 0 17px; align-self: flex-start; background: #aba9a9; display: flex; align-items: center; justify-content: center; }
.tray { margin-left: 920px; display: flex; align-items: center; height: 34px; }
.tr-chev { margin-left: 6px; margin-top: -4px; }
.tr-qq { margin-left: 14px; margin-top: -4px; }
.tr-green { margin-left: 12px; }
.tr-dark { margin-left: 11px; }
.tr-wifi { margin-left: 13px; }
.tr-vol { margin-left: 10px; }
.tr-ime { margin-left: 12px; color: #13233a; font-size: 18px; }
.tr-pin { margin-left: 19px; width: 18px; height: 18px; background: #fff; color: #111; font-size: 15px; line-height: 18px; text-align: center; }
.tr-clock { margin: -9px 0 0 22px; align-self: flex-start; width: 75px; height: 43px; padding-top: 4px; display: flex; flex-direction: column; align-items: center; color: #191b1e; font-size: 14px; line-height: 23px; overflow: hidden; }
.tr-clock span { white-space: nowrap; }
.tr-note { margin-left: 25px; }
.helpq { font: bold 20px "Liberation Sans", sans-serif; fill: #1a9ad8; text-anchor: middle; }
```

FILE: mesh.js
```js
// Builds the triangulated model in the 3D viewport from its control points.
(function () {
  var NS = "http://www.w3.org/2000/svg";
  var root = document.getElementById("mesh");
  var LINE = "#0a131c";

  function lerp(a, b, t) { return [a[0] + (b[0] - a[0]) * t, a[1] + (b[1] - a[1]) * t]; }
  function tri(parent, pts, fill, width) {
    var p = document.createElementNS(NS, "polygon");
    p.setAttribute("points", pts.map(function (q) { return q[0].toFixed(1) + "," + q[1].toFixed(1); }).join(" "));
    p.setAttribute("fill", fill);
    p.setAttribute("stroke", LINE);
    p.setAttribute("stroke-width", width || "1");
    p.setAttribute("stroke-linejoin", "round");
    p.setAttribute("vector-effect", "non-scaling-stroke");
    parent.appendChild(p);
  }
  function mix(c1, c2, t) {
    var r = c1.map(function (v, i) { return Math.round(v + (c2[i] - v) * t); });
    return "rgb(" + r.join(",") + ")";
  }
  function interp(list, u) {
    var i = Math.min(Math.floor(u), list.length - 2);
    return lerp(list[i], list[i + 1], u - i);
  }

  // underside of the plate (dense, dark)
  function underside() {
    var clipId = "plateclip";
    var outline = [[58, 255], [720, 382], [1452, 1058], [1120, 998], [760, 890], [660, 815], [340, 515]];
    var clip = document.createElementNS(NS, "clipPath");
    clip.setAttribute("id", clipId);
    var cp = document.createElementNS(NS, "polygon");
    cp.setAttribute("points", outline.map(function (q) { return q.join(","); }).join(" "));
    clip.appendChild(cp);
    root.appendChild(clip);
    var g = document.createElementNS(NS, "g");
    g.setAttribute("clip-path", "url(#" + clipId + ")");
    root.appendChild(g);
    var a = [58, 255], b = [720, 382], c = [1452, 1058], d = [790, 931];
    var nu = 8, nv = 18;
    function p(ii, jj) { return lerp(lerp(a, b, ii / nu), lerp(d, c, ii / nu), jj / nv); }
    for (var j = 0; j < nv; j++) {
      for (var i = 0; i < nu; i++) {
        var q00 = p(i, j), q10 = p(i + 1, j), q01 = p(i, j + 1), q11 = p(i + 1, j + 1);
        var qm = lerp(q00, q11, 0.5);
        tri(g, [q00, q10, qm], "#182a3e", "1.3");
        tri(g, [q10, q11, qm], "#15263a", "1.3");
        tri(g, [q11, q01, qm], "#182a3e", "1.3");
        tri(g, [q01, q00, qm], "#15263a", "1.3");
      }
    }
  }

  // long right-hand side of the plate
  function sideFace() {
    var t0 = [775, 178], t1 = [1507, 855], b0 = [720, 382], b1 = [1452, 1058];
    var m0 = [745, 285], m1 = [1480, 956];
    var n = 18;
    for (var i = 0; i < n; i++) {
      var ta = lerp(t0, t1, i / n), tb = lerp(t0, t1, (i + 1) / n);
      var ba = lerp(b0, b1, i / n), bb = lerp(b0, b1, (i + 1) / n);
      var ma = lerp(m0, m1, i / n), mb = lerp(m0, m1, (i + 1) / n);
      tri(root, [ta, tb, ma], "#223e5c");
      tri(root, [tb, mb, ma], "#203955");
      tri(root, [ma, bb, ba], "#1f3853");
      tri(root, [ma, mb, bb], "#223d5a");
    }
  }

  // front face of the plate
  function frontFace() {
    var T = [[115, 53], [197, 70], [280, 86], [362, 102], [445, 118], [527, 133], [610, 148], [693, 163], [775, 178]];
    var M = [[88, 155], [203, 178], [290, 192], [373, 207], [458, 228], [543, 243], [632, 260], [745, 285]];
    var B = [[58, 255], [142, 270], [222, 287], [305, 302], [388, 318], [472, 335], [555, 350], [638, 365], [720, 382]];
    var F = "#355f8c";
    for (var i = 0; i < 8; i++) {
      tri(root, [M[i], T[i], T[i + 1]], F);
      tri(root, [M[i], B[i], B[i + 1]], F);
      if (i < 7) {
        tri(root, [M[i], T[i + 1], M[i + 1]], F);
        tri(root, [M[i], B[i + 1], M[i + 1]], F);
      }
    }
  }

  // shade across a cylinder: dark silhouettes, bright middle
  function shade(x, wobble) {
    var dark = [28, 50, 72], light = [58, 107, 160];
    var t = Math.pow(Math.sin(Math.PI * Math.min(1, Math.max(0, x))), 1.5);
    if (x < 0.13 || x > 0.9) t *= 0.25;
    return mix(dark, light, Math.min(1, Math.max(0, t + wobble)));
  }

  function cylinder(top, bot, rows) {
    var m = top.length - 1;
    function us(j) {
      var list = [], i;
      if (j % 2 === 0) { for (i = 0; i <= m; i++) list.push(i); }
      else { list.push(0); for (i = 0; i < m; i++) list.push(i + 0.5); list.push(m); }
      return list;
    }
    function pt(u, j) { return lerp(interp(top, u), interp(bot, u), j / rows); }
    for (var j = 0; j < rows; j++) {
      var a = us(j), b = us(j + 1), ia = 0, ib = 0;
      while (ia < a.length - 1 || ib < b.length - 1) {
        var useA = ib >= b.length - 1 || (ia < a.length - 1 && a[ia + 1] <= b[ib + 1]);
        var pts, um;
        if (useA) {
          pts = [pt(a[ia], j), pt(a[ia + 1], j), pt(b[ib], j + 1)];
          um = (a[ia] + a[ia + 1] + b[ib]) / 3; ia++;
        } else {
          pts = [pt(a[ia], j), pt(b[ib + 1], j + 1), pt(b[ib], j + 1)];
          um = (a[ia] + b[ib] + b[ib + 1]) / 3; ib++;
        }
        tri(root, pts, shade(um / m, useA ? 0.04 : -0.04));
      }
    }
  }

  function cap(upper, lower) {
    var n = upper.length - 1, rows = 2;
    for (var j = 0; j < rows; j++) {
      for (var i = 0; i < n; i++) {
        var q00 = lerp(upper[i], lower[i], j / rows), q10 = lerp(upper[i + 1], lower[i + 1], j / rows);
        var q01 = lerp(upper[i], lower[i], (j + 1) / rows), q11 = lerp(upper[i + 1], lower[i + 1], (j + 1) / rows);
        tri(root, [q00, q10, q11], "#1a2e42");
        tri(root, [q00, q11, q01], "#182a3d");
      }
    }
  }

  underside();
  sideFace();
  frontFace();

  var c1Top = [[340, 515], [402, 392], [470, 398], [555, 420], [640, 455], [705, 497], [735, 530]];
  var c1Bot = [[203, 1010], [240, 998], [305, 1005], [390, 1025], [470, 1065], [530, 1115], [555, 1150]];
  var c1Low = [[203, 1010], [207, 1035], [260, 1075], [330, 1107], [400, 1135], [500, 1160], [555, 1155]];
  cylinder(c1Top, c1Bot, 6);
  cap(c1Bot, c1Low);

  var c2Top = [[765, 880], [805, 768], [880, 775], [960, 797], [1050, 835], [1115, 875], [1140, 905]];
  var c2Bot = [[607, 1385], [650, 1373], [715, 1380], [795, 1400], [880, 1435], [945, 1475], [975, 1505]];
  var c2Low = [[607, 1385], [612, 1412], [662, 1452], [730, 1482], [800, 1510], [900, 1532], [965, 1532]];
  cylinder(c2Top, c2Bot, 7);
  cap(c2Bot, c2Low);
})();
```
